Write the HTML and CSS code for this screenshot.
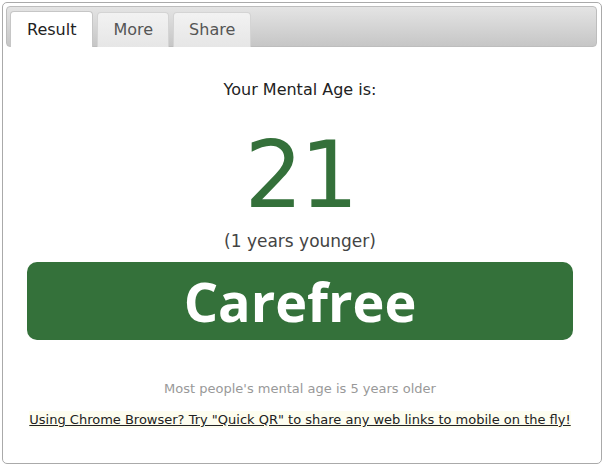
FILE: index.html
```
<!DOCTYPE html>
<html>

	<head>
		<meta charset="UTF-8">
		<title>Mental Age</title>
		<link rel="stylesheet" href="styles.css">
	</head>

	<body>
		<div class="box">
			<ul class="tabs">
				<li class="ac">Result</li>
				<li>More</li>
				<li>Share</li>
			</ul>
			<div class="panel">
				<p class="label">Your Mental Age is:</p>
				<p class="age">21</p>
				<p class="diff">(1 years younger)</p>
				<div class="type">Carefree</div>
				<p class="note">Most people's mental age is 5 years older</p>
				<p class="promo"><a href="javascript:;">Using Chrome Browser? Try "Quick QR" to share any web links to mobile on the fly!</a></p>
			</div>
		</div>
	</body>

</html>
```
FILE: styles.css
```
* {
	margin: 0;
	padding: 0;
}

li {
	list-style: none;
}

body {
	margin: 2px;
	font-family: "DejaVu Sans", Verdana, sans-serif;
	color: #222;
	background: #fff;
}

.box {
	width: 600px;
	height: 462px;
	box-sizing: border-box;
	border: 1px solid #aaa;
	border-radius: 5px;
	padding: 3px 4px 3px 3px;
}

.tabs {
	display: flex;
	align-items: flex-end;
	gap: 4px;
	height: 41px;
	box-sizing: border-box;
	padding: 0 0 0 3px;
	border: 1px solid #bdbdbd;
	border-radius: 4px;
	background: linear-gradient(#e4e4e4, #c6c6c6);
}

.tabs li {
	height: 35px;
	box-sizing: border-box;
	padding: 0 15px;
	line-height: 34px;
	font-size: 16px;
	color: #555;
	border: 1px solid #d4d4d4;
	border-bottom: none;
	border-radius: 4px 4px 0 0;
	background: linear-gradient(#f2f2f2, #e6e6e6);
	margin-bottom: -1px;
	cursor: pointer;
}

.tabs li.ac {
	height: 36px;
	padding: 0 16px;
	line-height: 36px;
	color: #222;
	background: #fff;
	border-color: #c6c6c6;
}

.panel {
	text-align: center;
	padding: 0 24px 0 21px;
}

.label {
	margin-top: 33px;
	font-size: 16px;
	line-height: 20px;
	color: #222;
}

.age {
	margin-top: 30px;
	font-size: 92px;
	line-height: 92px;
	letter-spacing: -3px;
	color: #34703a;
}

.diff {
	margin-top: 9px;
	font-size: 17px;
	line-height: 20px;
	color: #444;
}

.type {
	margin-top: 11px;
	height: 78px;
	line-height: 78px;
	border-radius: 10px;
	background: #34713a;
	color: #fff;
	font-family: "Open Sans", sans-serif;
	font-weight: bold;
	font-size: 54px;
}

.note {
	margin-top: 41px;
	font-size: 13px;
	line-height: 16px;
	color: #999;
}

.promo {
	margin-top: 14px;
	font-size: 13px;
	line-height: 18px;
}

.promo a {
	color: #222;
	background: #fdfdef;
	padding: 1px 0;
}
```
